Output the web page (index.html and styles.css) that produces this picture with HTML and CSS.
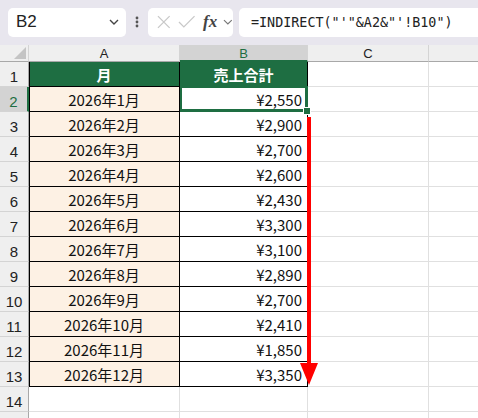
FILE: index.html
```html
<html><head>
<title>INDIRECT</title>
<link rel="stylesheet" href="styles.css">
</head><body>

<div class="bar">
  <div class="namebox">
    <span>B2</span>
    <svg class="chev" width="12" height="8" viewBox="0 0 12 8"><path d="M2 2 L6 6 L10 2" fill="none" stroke="#444" stroke-width="1.4"/></svg>
  </div>
  <div class="kebab">
    <svg width="4" height="12" viewBox="0 0 4 12"><circle cx="2" cy="2" r="1.4" fill="#555"/><circle cx="2" cy="6" r="1.4" fill="#555"/><circle cx="2" cy="10" r="1.4" fill="#555"/></svg>
  </div>
  <div class="fxbox">
    <svg width="16" height="16" viewBox="0 0 16 16"><path d="M2 2 L14 14 M14 2 L2 14" stroke="#c8c8c8" stroke-width="1.3"/></svg>
    <svg width="18" height="16" viewBox="0 0 18 16"><path d="M1 8 L6 13 L17 2" fill="none" stroke="#c8c8c8" stroke-width="1.3"/></svg>
    <span class="fx">fx</span>
    <svg width="10" height="8" viewBox="0 0 10 8"><path d="M1 2 L5 6 L9 2" fill="none" stroke="#777" stroke-width="1.2"/></svg>
  </div>
  <div class="formula">=INDIRECT("'"&amp;A2&amp;"'!B10")</div>
</div>

<div class="sheet">
  <div class="corner"><svg width="12" height="12" viewBox="0 0 12 12"><path d="M12 0 L12 12 L0 12 Z" fill="#c4c4c4"/></svg></div>
  <div class="colhead">A</div>
  <div class="colhead sel">B</div>
  <div class="colhead">C</div>
  <div class="colhead last"></div>

  <div class="rowhead">1</div>
  <div class="cell th">月</div>
  <div class="cell th">売上合計</div>
  <div class="cell"></div><div class="cell last"></div>

  <div class="rowhead sel">2</div>
  <div class="cell ta">2026年1月</div>
  <div class="cell tb active">¥2,550<i class="handle"></i></div>
  <div class="cell"></div><div class="cell last"></div>

  <div class="rowhead">3</div>
  <div class="cell ta">2026年2月</div>
  <div class="cell tb">¥2,900</div>
  <div class="cell"></div><div class="cell last"></div>

  <div class="rowhead">4</div>
  <div class="cell ta">2026年3月</div>
  <div class="cell tb">¥2,700</div>
  <div class="cell"></div><div class="cell last"></div>

  <div class="rowhead">5</div>
  <div class="cell ta">2026年4月</div>
  <div class="cell tb">¥2,600</div>
  <div class="cell"></div><div class="cell last"></div>

  <div class="rowhead">6</div>
  <div class="cell ta">2026年5月</div>
  <div class="cell tb">¥2,430</div>
  <div class="cell"></div><div class="cell last"></div>

  <div class="rowhead">7</div>
  <div class="cell ta">2026年6月</div>
  <div class="cell tb">¥3,300</div>
  <div class="cell"></div><div class="cell last"></div>

  <div class="rowhead">8</div>
  <div class="cell ta">2026年7月</div>
  <div class="cell tb">¥3,100</div>
  <div class="cell"></div><div class="cell last"></div>

  <div class="rowhead">9</div>
  <div class="cell ta">2026年8月</div>
  <div class="cell tb">¥2,890</div>
  <div class="cell"></div><div class="cell last"></div>

  <div class="rowhead">10</div>
  <div class="cell ta">2026年9月</div>
  <div class="cell tb">¥2,700</div>
  <div class="cell"></div><div class="cell last"></div>

  <div class="rowhead">11</div>
  <div class="cell ta">2026年10月</div>
  <div class="cell tb">¥2,410</div>
  <div class="cell"></div><div class="cell last"></div>

  <div class="rowhead">12</div>
  <div class="cell ta">2026年11月</div>
  <div class="cell tb">¥1,850</div>
  <div class="cell"></div><div class="cell last"></div>

  <div class="rowhead">13</div>
  <div class="cell ta">2026年12月</div>
  <div class="cell tb">¥3,350</div>
  <div class="cell"></div><div class="cell last"></div>

  <div class="rowhead">14</div>
  <div class="cell"></div><div class="cell"></div><div class="cell"></div><div class="cell last"></div>

  <div class="rowhead"></div>
  <div class="cell"></div><div class="cell"></div><div class="cell"></div><div class="cell last"></div>

  <svg class="arrow" width="20" height="270" viewBox="0 0 20 270"><rect x="8" y="0" width="4" height="248" fill="#ff0000"/><path d="M1 246 L19 246 L10 268 Z" fill="#ff0000"/></svg>
</div>

</body></html>
```

FILE: styles.css
```css
body {
  margin:0;
  background-color:#ffffff;
  font-family:"Noto Sans CJK JP", "Liberation Sans", sans-serif;
  overflow:hidden;
}
.bar {
  height:45px;
  background-color:#e8e6ee;
  display:flex;
  align-items:center;
  padding-left:8px;
  box-sizing:border-box;
  padding-bottom:1px;
}
.namebox {
  width:118px;
  height:29px;
  background-color:#ffffff;
  border-radius:5px;
  display:flex;
  align-items:center;
  justify-content:space-between;
  padding-left:8px;
  padding-right:6px;
  box-sizing:border-box;
  font-family:"Liberation Sans", sans-serif;
  font-size:17px;
  color:#222222;
}
.kebab {
  width:22px;
  display:flex;
  justify-content:center;
}
.fxbox {
  width:85px;
  height:29px;
  background-color:#ffffff;
  border-radius:5px;
  display:flex;
  align-items:center;
  padding-left:8px;
  gap:6px;
  box-sizing:border-box;
}
.fx {
  font-family:"Liberation Serif", serif;
  font-style:italic;
  font-weight:bold;
  font-size:17px;
  color:#444444;
  margin-left:2px;
}
.formula {
  flex:1;
  height:29px;
  margin-left:6px;
  background-color:#ffffff;
  border-radius:5px 0 0 5px;
  display:flex;
  align-items:center;
  padding-left:12px;
  font-family:"DejaVu Sans Mono", monospace;
  font-size:13.4px;
  color:#222222;
}
.sheet {
  position:relative;
  display:grid;
  grid-template-columns:29px 151px 128px 121px 49px;
  grid-template-rows:17px repeat(15, 25px);
}
.sheet div {
  box-sizing:border-box;
}
.corner {
  background-color:#efefef;
  border-right:1px solid #d4d4d4;
  border-bottom:1px solid #a8a8a8;
  display:flex;
  align-items:flex-end;
  justify-content:flex-end;
  padding:0 2px 2px 0;
}
.colhead {
  background-color:#efefef;
  border-right:1px solid #d4d4d4;
  border-bottom:1px solid #a8a8a8;
  font-family:"Liberation Sans", sans-serif;
  font-size:13px;
  color:#222222;
  text-align:center;
  line-height:17px;
}
.colhead.sel {
  background-color:#d3d3d3;
  color:#1e6e42;
  border-bottom:2px solid #1e6e42;
}
.rowhead {
  background-color:#efefef;
  border-right:1px solid #a8a8a8;
  border-bottom:1px solid #d4d4d4;
  font-family:"Liberation Sans", sans-serif;
  font-size:15px;
  color:#222222;
  text-align:center;
  display:flex;
  align-items:flex-end;
  justify-content:center;
  padding-bottom:1px;
}
.rowhead.sel {
  background-color:#d3d3d3;
  color:#1e6e42;
  border-right:2px solid #1e6e42;
}
.cell {
  border-right:1px solid #e0e0e0;
  border-bottom:1px solid #e0e0e0;
  font-size:15px;
  color:#111111;
  display:flex;
  align-items:center;
  position:relative;
}
.last {
  border-right:none;
}
.th {
  background-color:#1e6e42;
  color:#ffffff;
  font-weight:bold;
  justify-content:center;
  border-right:1px solid #000000;
  border-bottom:1px solid #000000;
}
.ta {
  background-color:#fdf1e4;
  justify-content:center;
  border-right:1px solid #000000;
  border-bottom:1px solid #000000;
  box-shadow:inset 1px 0 0 #000000;
}
.sheet .th:nth-child(7) {
  box-shadow:inset 1px 0 0 #000000;
}
.tb {
  justify-content:flex-end;
  padding-right:5px;
  border-right:1px solid #000000;
  border-bottom:1px solid #000000;
}
.active {
  box-shadow:inset 0 0 0 2px #1e6e42;
  border-right:1px solid #1e6e42;
  border-bottom:1px solid #1e6e42;
  margin-top:-1px;
  padding-top:1px;
}
.handle {
  position:absolute;
  right:-4px;
  bottom:-4px;
  width:6px;
  height:6px;
  background-color:#1e6e42;
  border:1px solid #ffffff;
  z-index:2;
}
.arrow {
  position:absolute;
  left:299px;
  top:72px;
}
```
